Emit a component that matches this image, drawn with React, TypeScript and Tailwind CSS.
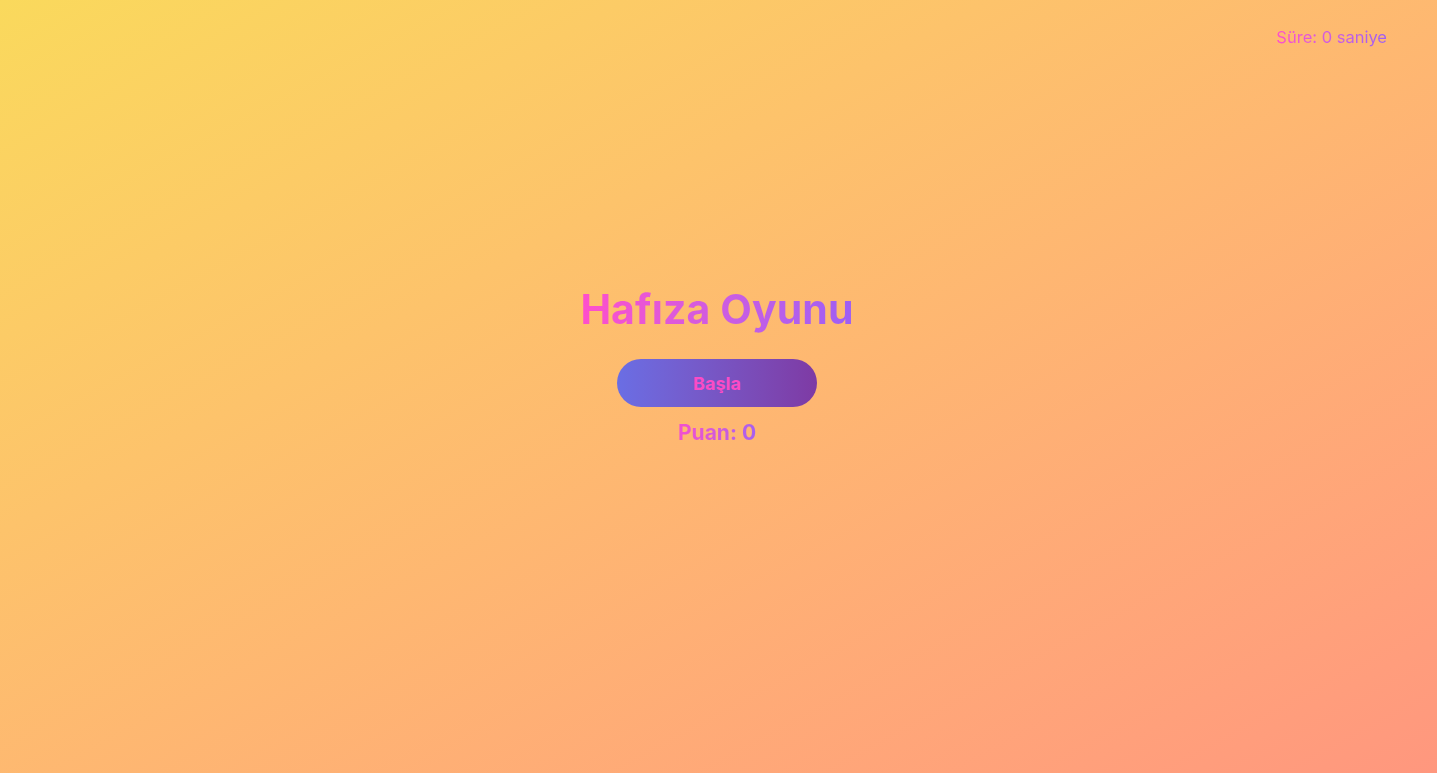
export default function App() {
  const gradText =
    "bg-gradient-to-r from-[#ff4ecb] to-[#9d5ef5] bg-clip-text text-transparent";

  return (
    <div
      className="min-h-screen w-full flex flex-col bg-gradient-to-br from-[#fad95c] to-[#ff977e]"
      style={{ fontFamily: "Inter, 'Open Sans', sans-serif" }}
    >
      {/* Timer */}
      <header className="flex justify-end px-[50px] pt-[26px]">
        <span className={`text-[16.5px] leading-[22px] ${gradText}`}>
          Süre: 0 saniye
        </span>
      </header>

      {/* Game */}
      <main className="flex-1 flex flex-col items-center justify-center pb-[89px] pr-[3px]">
        <h1
          className={`text-[41px] leading-[48px] font-bold tracking-[0.1px] ${gradText}`}
        >
          Hafıza Oyunu
        </h1>
        <button className="mt-[26px] w-[200px] h-[48px] rounded-full bg-gradient-to-r from-[#6a6ee4] to-[#7e3aa4] text-[18px] font-bold text-[#fb4bc6]">
          Başla
        </button>
        <div className="mt-[12px] w-[272px] text-center">
          <span className="inline-block bg-gradient-to-r from-[#f34fcf] via-[#d35ada] to-[#a65ff0] bg-clip-text text-transparent text-[21px] leading-[28px] font-bold">
            Puan: 0
          </span>
        </div>
      </main>
    </div>
  );
}
